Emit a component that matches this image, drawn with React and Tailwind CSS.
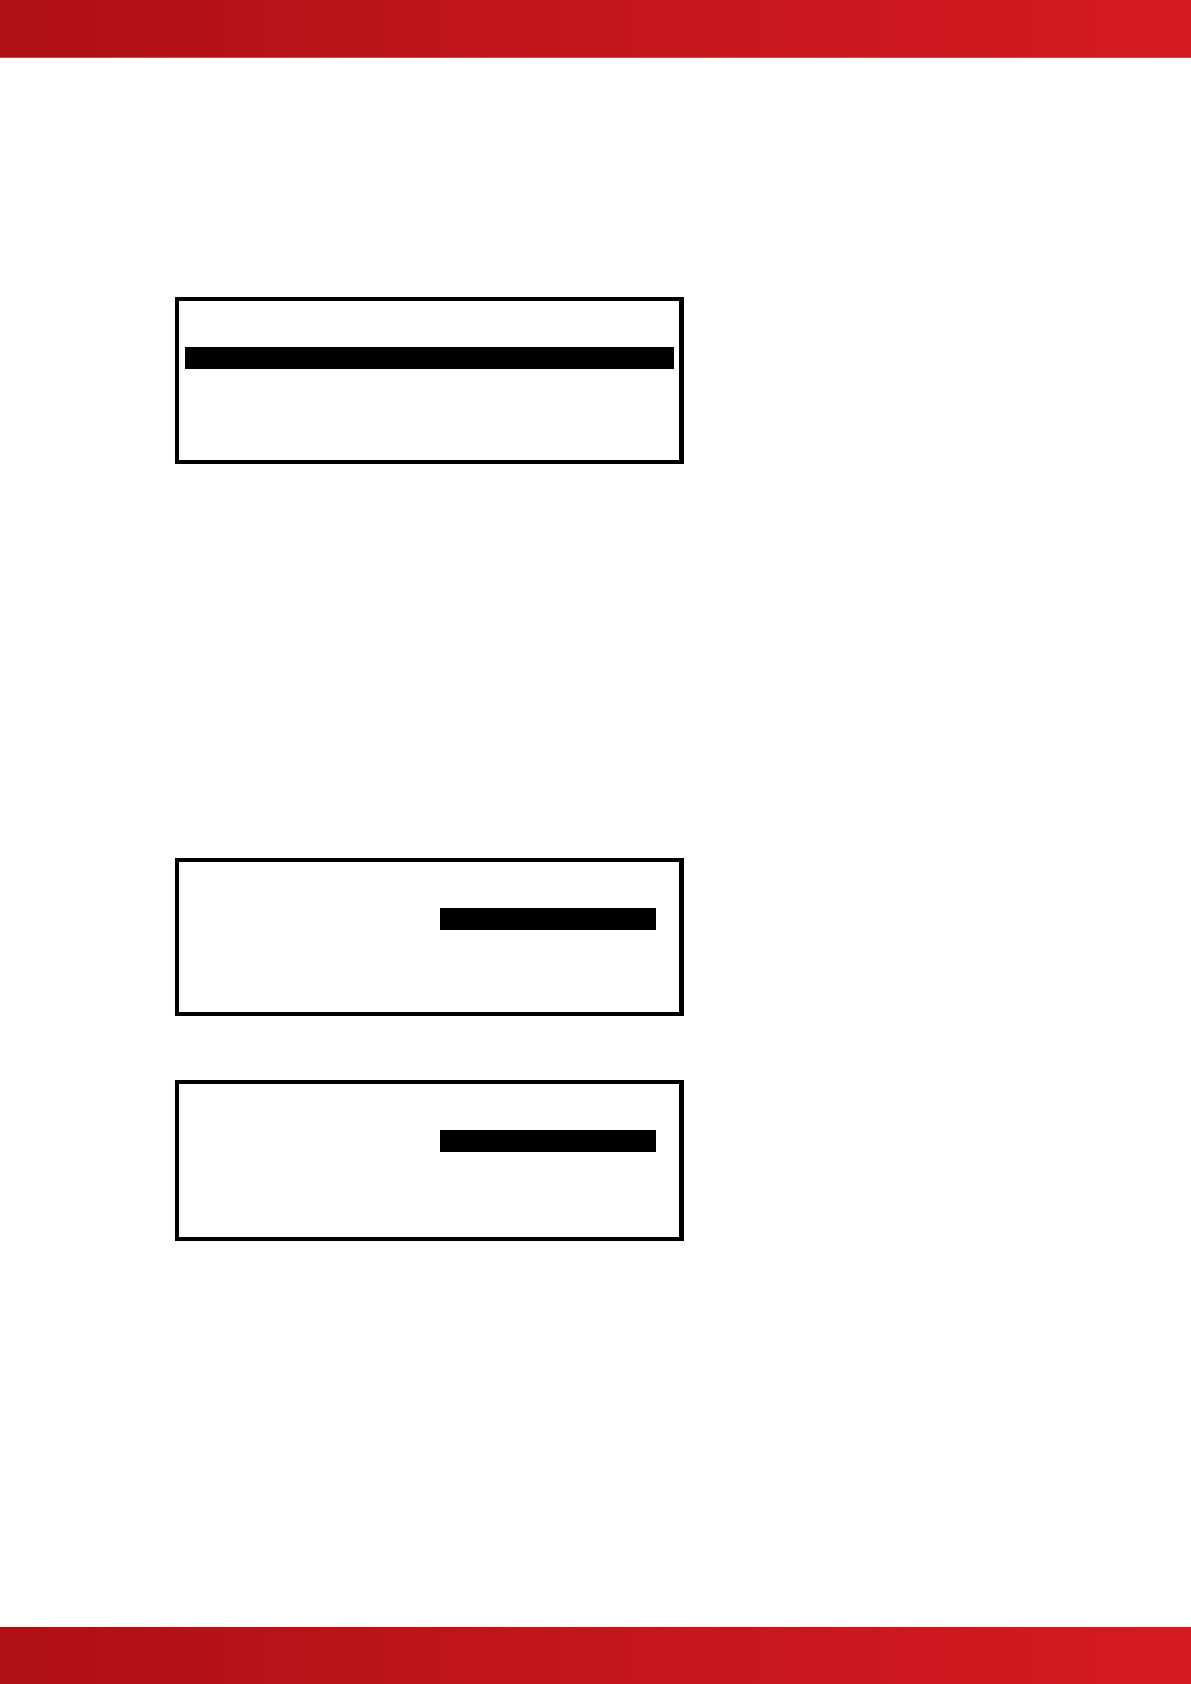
import React from 'react';
import clsx from 'clsx';

// Each panel display shows one highlighted row
const displays = [
  { id: 'menu', frame: 'h-[167px]', bar: 'h-[22px] ml-[6px] mr-[5px]' },
  { id: 'first-entry', frame: 'h-[158px] mt-[394px]', bar: 'h-[22px] w-[216px] ml-auto mr-[23px]' },
  { id: 'second-entry', frame: 'h-[161px] mt-16', bar: 'h-[22px] w-[216px] ml-auto mr-[23px]' },
];

const bandColors = 'bg-linear-to-r from-[#ae1014] via-[#c3161b] to-[#d41a21]';

const Display = ({ frame, bar }) => (
  <section className={clsx('w-full max-w-[509px] border-4 border-r-[5px] border-black bg-white pt-[46px]', frame)}>
    <div className={clsx('bg-black', bar)} />
  </section>
);

const App = () => {
  return (
    <div className="flex min-h-screen flex-col bg-white">
      <header className={clsx('h-[58px] border-b border-[#de454b] bg-clip-padding', bandColors)} />

      <main className="flex-1 px-[175px] pt-[239px] pb-16">
        {displays.map((display) => (
          <Display key={display.id} frame={display.frame} bar={display.bar} />
        ))}
      </main>

      <footer className={clsx('h-[57px]', bandColors)} />
    </div>
  );
};

export default App;
